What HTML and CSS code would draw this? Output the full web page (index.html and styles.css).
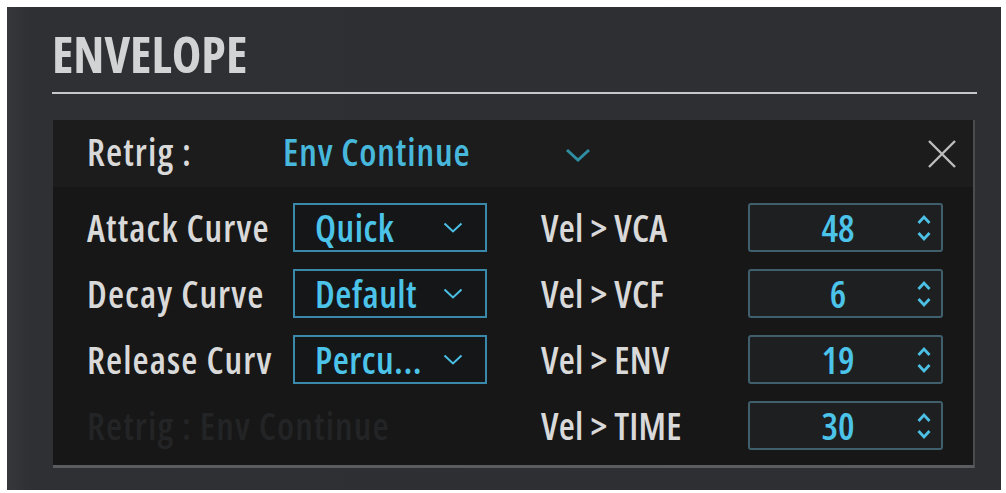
FILE: index.html
```html
<!DOCTYPE html>
<html>
<head>
<meta charset="utf-8">
<link rel="stylesheet" href="styles.css">
</head>
<body>
<div class="panel">
  <h1 class="title">ENVELOPE</h1>
  <div class="rule"></div>
  <div class="inner">
    <div class="head">
      <span class="label retrig">Retrig :</span>
      <span class="value">Env Continue</span>
      <svg class="chev-big" viewBox="0 0 26 14" width="26" height="14"><path d="M2 2 L13 12 L24 2" fill="none" stroke="#2f8ea2" stroke-width="3"/></svg>
      <svg class="close" viewBox="0 0 30 30" width="30" height="30"><path d="M2 2 L28 28 M28 2 L2 28" fill="none" stroke="#bdbdbd" stroke-width="2.4"/></svg>
    </div>
    <div class="grid">
      <span class="label left">Attack Curve</span>
      <div class="drop"><span>Quick</span><svg class="chev" viewBox="0 0 20 11" width="20" height="11"><path d="M1.5 1.5 L10 9.5 L18.5 1.5" fill="none" stroke="#4cc0e4" stroke-width="2"/></svg></div>
      <span class="label right">Vel &gt; VCA</span>
      <div class="num"><span>48</span><svg class="spin" viewBox="0 0 16 30" width="16" height="30"><path d="M2.5 10 L8 4 L13.5 10 M2.5 20 L8 26 L13.5 20" fill="none" stroke="#4cc0e4" stroke-width="2.8"/></svg></div>

      <span class="label left">Decay Curve</span>
      <div class="drop"><span>Default</span><svg class="chev" viewBox="0 0 20 11" width="20" height="11"><path d="M1.5 1.5 L10 9.5 L18.5 1.5" fill="none" stroke="#4cc0e4" stroke-width="2"/></svg></div>
      <span class="label right">Vel &gt; VCF</span>
      <div class="num"><span>6</span><svg class="spin" viewBox="0 0 16 30" width="16" height="30"><path d="M2.5 10 L8 4 L13.5 10 M2.5 20 L8 26 L13.5 20" fill="none" stroke="#4cc0e4" stroke-width="2.8"/></svg></div>

      <span class="label left">Release Curv</span>
      <div class="drop"><span>Percu...</span><svg class="chev" viewBox="0 0 20 11" width="20" height="11"><path d="M1.5 1.5 L10 9.5 L18.5 1.5" fill="none" stroke="#4cc0e4" stroke-width="2"/></svg></div>
      <span class="label right">Vel &gt; ENV</span>
      <div class="num"><span>19</span><svg class="spin" viewBox="0 0 16 30" width="16" height="30"><path d="M2.5 10 L8 4 L13.5 10 M2.5 20 L8 26 L13.5 20" fill="none" stroke="#4cc0e4" stroke-width="2.8"/></svg></div>

      <span class="label left ghost">Retrig : Env Continue</span>
      <span class="label right">Vel &gt; TIME</span>
      <div class="num"><span>30</span><svg class="spin" viewBox="0 0 16 30" width="16" height="30"><path d="M2.5 10 L8 4 L13.5 10 M2.5 20 L8 26 L13.5 20" fill="none" stroke="#4cc0e4" stroke-width="2.8"/></svg></div>
    </div>
  </div>
</div>
</body>
</html>
```
FILE: styles.css
```css
html, body {
  margin: 0;
  padding: 0;
  background: #ffffff;
}
body {
  font-family: "Open Sans", sans-serif;
  font-stretch: 75%;
  width: 1006px;
  height: 493px;
  overflow: hidden;
}
.panel {
  margin: 7px 0 0 7px;
  width: 994px;
  height: 483px;
  box-sizing: border-box;
  background: linear-gradient(90deg, #35373b 0px, #2e3033 22px, #2d2f32 100%);
  padding: 0 24px 0 45px;
  display: flex;
  flex-direction: column;
}
.title {
  margin: 0;
  height: 84px;
  box-sizing: border-box;
  padding-top: 19px;
  font-size: 50px;
  line-height: 56px;
  font-weight: bold;
  color: #d2d3d4;
}
.rule {
  height: 2px;
  background: #c6c7c8;
  margin-top: 1px;
}
.inner {
  margin-top: 26px;
  margin-left: 1px;
  margin-right: 2px;
  height: 348px;
  background: #171717;
  border-right: 2px solid #4a4c50;
  border-bottom: 3px solid #5a5c60;
  box-sizing: border-box;
  display: flex;
  flex-direction: column;
}
.head {
  height: 67px;
  box-sizing: border-box;
  padding-bottom: 4px;
  background: #1c1c1d;
  display: flex;
  align-items: center;
  padding-left: 34px;
  padding-right: 16px;
}
.label {
  font-size: 37px;
  font-weight: 600;
  color: #d9d9d9;
  white-space: nowrap;
}
.left,
.retrig {
  letter-spacing: 1.1px;
}
.right {
  letter-spacing: 0.2px;
}
.retrig {
  width: 196px;
}
.value {
  font-size: 37px;
  font-weight: 600;
  letter-spacing: 0.9px;
  color: #47b8dc;
  width: 282px;
}
.chev-big {
  margin-top: 6px;
}
.close {
  margin-left: auto;
  margin-top: 4px;
}
.grid {
  display: grid;
  grid-template-columns: 206px 194px 54px 207px 195px;
  grid-auto-rows: 49px;
  row-gap: 17px;
  padding: 16px 0 0 34px;
  align-items: center;
}
.grid > .right {
  grid-column: 4;
}
.ghost {
  grid-column: 1 / 3;
  color: #232425;
}
.drop {
  height: 49px;
  box-sizing: border-box;
  border: 2px solid #3b89aa;
  background: #141618;
  display: flex;
  align-items: center;
  padding-left: 20px;
  padding-right: 22px;
  font-size: 37px;
  font-weight: 600;
  letter-spacing: 0.5px;
  color: #4cc3e8;
}
.drop .chev {
  margin-left: auto;
}
.num {
  grid-column: 5;
  height: 49px;
  box-sizing: border-box;
  border: 2px solid #3f5f6c;
  border-radius: 3px;
  background: #1e1f21;
  display: flex;
  align-items: center;
  position: relative;
  font-size: 37px;
  font-weight: 600;
  color: #4cc3e8;
}
.num span {
  position: absolute;
  left: 0;
  width: 176px;
  text-align: center;
}
.num .spin {
  margin-left: auto;
  margin-right: 9px;
}
```
